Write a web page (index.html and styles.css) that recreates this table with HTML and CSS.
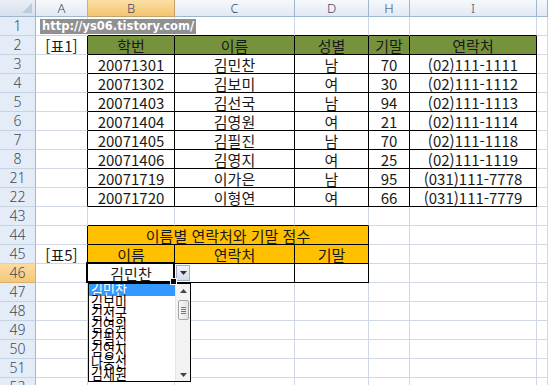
FILE: index.html
```html
<!DOCTYPE html>
<html lang="ko">
<head>
<meta charset="utf-8">
<title>표</title>
<link rel="stylesheet" href="styles.css">
</head>
<body>
<div class="sheet">
  <div class="grid">
    <!-- header row -->
    <div class="corner"><span class="tri"></span></div>
    <div class="ch">A</div>
    <div class="ch sel">B</div>
    <div class="ch">C</div>
    <div class="ch">D</div>
    <div class="ch">H</div>
    <div class="ch">I</div>
    <div class="ch"></div>

    <!-- row 1 -->
    <div class="rh">1</div>
    <div class="c"></div>
    <div class="c tb"></div><div class="c tb"></div><div class="c tb"></div><div class="c tb"></div><div class="c tb"></div>
    <div class="c"></div>

    <!-- row 2 -->
    <div class="rh">2</div>
    <div class="c bl">[표1]</div>
    <div class="c t g">학번</div><div class="c t g">이름</div><div class="c t g">성별</div><div class="c t g">기말</div><div class="c t g">연락처</div>
    <div class="c"></div>

    <div class="rh">3</div><div class="c bl"></div>
    <div class="c t">20071301</div><div class="c t">김민찬</div><div class="c t">남</div><div class="c t">70</div><div class="c t">(02)111-1111</div><div class="c"></div>

    <div class="rh">4</div><div class="c bl"></div>
    <div class="c t">20071302</div><div class="c t">김보미</div><div class="c t">여</div><div class="c t">30</div><div class="c t">(02)111-1112</div><div class="c"></div>

    <div class="rh">5</div><div class="c bl"></div>
    <div class="c t">20071403</div><div class="c t">김선국</div><div class="c t">남</div><div class="c t">94</div><div class="c t">(02)111-1113</div><div class="c"></div>

    <div class="rh">6</div><div class="c bl"></div>
    <div class="c t">20071404</div><div class="c t">김영원</div><div class="c t">여</div><div class="c t">21</div><div class="c t">(02)111-1114</div><div class="c"></div>

    <div class="rh">7</div><div class="c bl"></div>
    <div class="c t">20071405</div><div class="c t">김필진</div><div class="c t">남</div><div class="c t">70</div><div class="c t">(02)111-1118</div><div class="c"></div>

    <div class="rh">8</div><div class="c bl"></div>
    <div class="c t">20071406</div><div class="c t">김영지</div><div class="c t">여</div><div class="c t">25</div><div class="c t">(02)111-1119</div><div class="c"></div>

    <div class="rh">21</div><div class="c bl"></div>
    <div class="c t">20071719</div><div class="c t">이가은</div><div class="c t">남</div><div class="c t">95</div><div class="c t">(031)111-7778</div><div class="c"></div>

    <div class="rh">22</div><div class="c bl"></div>
    <div class="c t">20071720</div><div class="c t">이형연</div><div class="c t">여</div><div class="c t">66</div><div class="c t">(031)111-7779</div><div class="c"></div>

    <!-- row 43 -->
    <div class="rh">43</div><div class="c"></div>
    <div class="c tb"></div><div class="c tb"></div><div class="c tb"></div><div class="c"></div><div class="c"></div><div class="c"></div>

    <!-- row 44 -->
    <div class="rh">44</div><div class="c bl"></div>
    <div class="c t o span3">이름별 연락처와 기말 점수</div>
    <div class="c"></div><div class="c"></div><div class="c"></div>

    <!-- row 45 -->
    <div class="rh">45</div><div class="c bl">[표5]</div>
    <div class="c t o">이름</div><div class="c t o">연락처</div><div class="c t o">기말</div>
    <div class="c"></div><div class="c"></div><div class="c"></div>

    <!-- row 46 -->
    <div class="rh sel">46</div><div class="c bl"></div>
    <div class="c t active">김민찬</div><div class="c t"></div><div class="c t"></div>
    <div class="c"></div><div class="c"></div><div class="c"></div>

    <div class="rh">47</div><div class="c"></div><div class="c"></div><div class="c"></div><div class="c"></div><div class="c"></div><div class="c"></div><div class="c"></div>
    <div class="rh">48</div><div class="c"></div><div class="c"></div><div class="c"></div><div class="c"></div><div class="c"></div><div class="c"></div><div class="c"></div>
    <div class="rh">49</div><div class="c"></div><div class="c"></div><div class="c"></div><div class="c"></div><div class="c"></div><div class="c"></div><div class="c"></div>
    <div class="rh">50</div><div class="c"></div><div class="c"></div><div class="c"></div><div class="c"></div><div class="c"></div><div class="c"></div><div class="c"></div>
    <div class="rh">51</div><div class="c"></div><div class="c"></div><div class="c"></div><div class="c"></div><div class="c"></div><div class="c"></div><div class="c"></div>
    <div class="rh">52</div><div class="c"></div><div class="c"></div><div class="c"></div><div class="c"></div><div class="c"></div><div class="c"></div><div class="c"></div>
  </div>

  <div class="watermark">http://ys06.tistory.com/</div>

  <div class="ddbtn">
    <svg width="7" height="4" viewBox="0 0 7 4"><path d="M0 0H7L3.5 4Z" fill="#333"/></svg>
  </div>

  <div class="ddlist">
    <ul class="items">
      <li class="hi"><span>김민찬</span></li>
      <li><span>김보미</span></li>
      <li><span>김선국</span></li>
      <li><span>김영원</span></li>
      <li><span>김필진</span></li>
      <li><span>김영지</span></li>
      <li><span>나웅선</span></li>
      <li><span>김채원</span></li>
    </ul>
    <div class="sb">
      <svg class="arr" width="7" height="4" viewBox="0 0 7 4"><path d="M0 4H7L3.5 0Z" fill="#444"/></svg>
      <div class="thumb">
        <span></span><span></span><span></span><span></span>
      </div>
      <svg class="arr down" width="7" height="4" viewBox="0 0 7 4"><path d="M0 0H7L3.5 4Z" fill="#444"/></svg>
    </div>
  </div>
</div>
</body>
</html>
```
FILE: styles.css
```css
html, body {
  margin: 0;
  padding: 0;
  background: #fff;
  overflow: hidden;
}
.sheet {
  position: relative;
  width: 548px;
  height: 385px;
  overflow: hidden;
  font-family: "Noto Sans CJK KR", "Noto Sans", sans-serif;
}
.grid {
  display: grid;
  grid-template-columns: 36px 52px 87px 120px 74px 41px 127px 11px;
  grid-template-rows: 17px repeat(20, 19px);
}
.grid > div {
  box-sizing: border-box;
}
.corner {
  position: relative;
  background: linear-gradient(#e9eef6, #d7e0ee);
  border-right: 1px solid #9eb6ce;
  border-bottom: 1px solid #9eb6ce;
}
.tri {
  position: absolute;
  right: 3px;
  bottom: 3px;
  width: 0;
  height: 0;
  border-left: 10px solid transparent;
  border-bottom: 10px solid #bdcbdc;
}
.ch {
  display: flex;
  align-items: center;
  justify-content: center;
  background: linear-gradient(#f6f9fc, #e2e9f3);
  border-right: 1px solid #9eb6ce;
  border-bottom: 1px solid #9eb6ce;
  color: #3c4a5b;
  font-family: "Noto Sans", sans-serif;
  font-size: 13px;
  font-weight: 300;
  line-height: 16px;
}
.ch.sel {
  background: linear-gradient(#fbdfa6, #f5c56e);
  border-right-color: #c2a26a;
  border-bottom-color: #c2a26a;
}
.rh {
  display: flex;
  align-items: center;
  justify-content: center;
  background: #e4ecf7;
  border-right: 1px solid #9eb6ce;
  border-bottom: 1px solid #c5d3e3;
  color: #3c4a5b;
  font-family: "Noto Sans", sans-serif;
  font-size: 14px;
  font-weight: 300;
  line-height: 18px;
}
.rh.sel {
  background: linear-gradient(#fbdba0, #f6c877);
  border-bottom-color: #d7b26e;
}
.c {
  display: flex;
  align-items: flex-end;
  justify-content: center;
  border-right: 1px solid #d0d7e5;
  border-bottom: 1px solid #d0d7e5;
  font-size: 15px;
  line-height: 17px;
  color: #1a1a1a;
  white-space: nowrap;
  overflow: visible;
}
.c.bl {
  border-right-color: #000;
}
.c.tb {
  border-bottom-color: #000;
}
.c.t {
  border-right-color: #000;
  border-bottom-color: #000;
}
.c.g {
  background: #76923c;
}
.c.o {
  background: #ffc000;
}
.span3 {
  grid-column: span 3;
}
.c.active {
  position: relative;
}
.c.active::after {
  content: "";
  position: absolute;
  left: -2px;
  top: -2px;
  right: -1px;
  bottom: -1px;
  border: 2px solid #000;
}
.c.active::before {
  content: "";
  position: absolute;
  right: -3px;
  bottom: -3px;
  width: 5px;
  height: 5px;
  background: #000;
  border: 1px solid #fff;
  z-index: 2;
}
.watermark {
  position: absolute;
  left: 40px;
  top: 19px;
  width: 156px;
  height: 15px;
  background: rgba(125, 125, 125, 0.85);
  color: #fff;
  font-family: "DejaVu Sans", sans-serif;
  font-weight: bold;
  font-size: 11.5px;
  line-height: 15px;
  padding-left: 2px;
  box-sizing: border-box;
  white-space: nowrap;
  overflow: hidden;
}
.ddbtn {
  position: absolute;
  left: 176px;
  top: 265px;
  width: 14px;
  height: 16px;
  box-sizing: border-box;
  border: 1px solid #9fb0c6;
  background: linear-gradient(#f2f5fa, #d3dce9);
  display: flex;
  align-items: center;
  justify-content: center;
}
.ddlist {
  position: absolute;
  left: 88px;
  top: 283px;
  width: 103px;
  height: 99px;
  box-sizing: border-box;
  border: 1px solid #000;
  background: #fff;
  display: flex;
  overflow: hidden;
}
.items {
  list-style: none;
  margin: 0;
  padding: 0;
  flex: 1;
  overflow: hidden;
}
.items li {
  height: 12px;
  line-height: 12px;
  font-size: 13px;
  padding-left: 2px;
  color: #000;
  white-space: nowrap;
  overflow: visible;
}
.items li span {
  display: inline-block;
  transform: scaleY(1.25);
  transform-origin: 50% 60%;
}
.items li.hi {
  background: #3399ff;
  color: #fff;
}
.sb {
  width: 15px;
  background: #f3f3f3;
  border-left: 1px solid #e6e6e6;
  display: flex;
  flex-direction: column;
  align-items: center;
  padding-top: 5px;
  box-sizing: border-box;
}
.arr {
  display: block;
}
.arr.down {
  margin-top: auto;
  margin-bottom: 4px;
}
.thumb {
  margin-top: 7px;
  width: 11px;
  height: 20px;
  box-sizing: border-box;
  border: 1px solid #a5a5a5;
  border-radius: 2px;
  background: linear-gradient(90deg, #f7f7f7, #e2e2e2);
  display: flex;
  flex-direction: column;
  align-items: center;
  justify-content: center;
  gap: 1px;
}
.thumb span {
  display: block;
  width: 5px;
  height: 1px;
  background: #777;
}
```
